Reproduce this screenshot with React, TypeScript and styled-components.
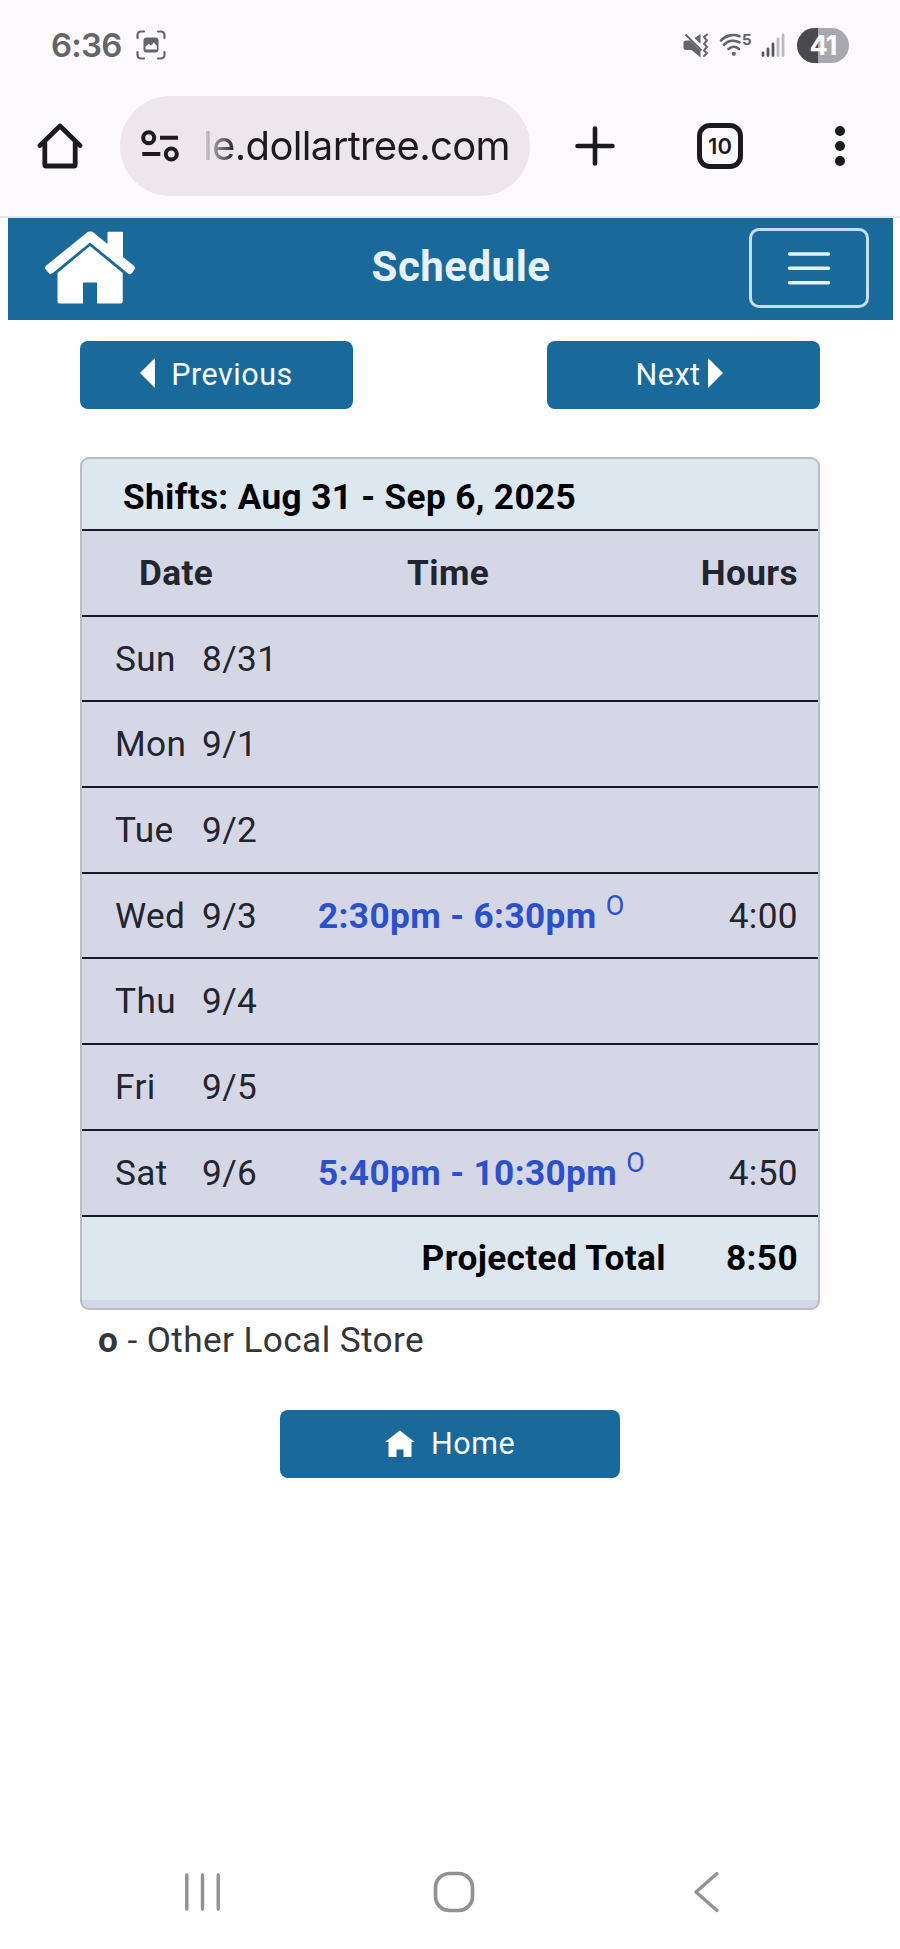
import React from "react";
import styled, { createGlobalStyle } from "styled-components";

const BLUE = "#1a699b";

const GlobalStyle = createGlobalStyle`
  * { box-sizing: border-box; }
  body { margin: 0; background: #fefefe; }
`;

const Screen = styled.div`
  width: 900px;
  height: 1949px;
  display: flex;
  flex-direction: column;
  overflow: hidden;
  background: #fefefe;
  font-family: Roboto, "Liberation Sans", sans-serif;
  svg { display: block; flex: none; }
`;

const BrowserChrome = styled.header`
  height: 218px;
  background: #fdfaff;
  border-bottom: 2px solid #e8e6ec;
`;

const StatusBar = styled.div`
  height: 90px;
  padding: 0 51px;
  display: flex;
  justify-content: space-between;
  align-items: center;
  font-family: Inter, sans-serif;
`;

const StatusGroup = styled.div<{ $gap: number }>`
  display: flex;
  align-items: center;
  gap: ${(p) => p.$gap}px;
`;

const Clock = styled.span`
  width: 70px;
  font-size: 33px;
  line-height: 40px;
  font-weight: 600;
  letter-spacing: -0.8px;
  color: #656568;
  white-space: nowrap;
`;

const Battery = styled.span`
  width: 52px;
  height: 35px;
  margin-left: 2px;
  border-radius: 18px;
  background: linear-gradient(90deg, #4a494c 41%, #a9a7af 41%);
  color: #fff;
  font-size: 27px;
  font-weight: 700;
  line-height: 36px;
  text-align: center;
  letter-spacing: -1px;
`;

const Toolbar = styled.div`
  height: 126px;
  padding: 6px 0 0 37px;
  display: flex;
  align-items: flex-start;
`;

const ToolButton = styled.span<{ $width: number; $gap: number }>`
  width: ${(p) => p.$width}px;
  height: 100px;
  margin-left: ${(p) => p.$gap}px;
  display: flex;
  align-items: center;
  justify-content: center;
`;

const AddressPill = styled.div`
  width: 410px;
  height: 100px;
  margin-left: 37px;
  padding-left: 21px;
  border-radius: 50px;
  background: #ede6ed;
  display: flex;
  align-items: center;
`;

const Address = styled.span`
  margin-left: 24px;
  width: 310px;
  font-family: Inter, sans-serif;
  font-size: 40px;
  line-height: 50px;
  letter-spacing: -0.65px;
  white-space: nowrap;
  color: transparent;
  background: linear-gradient(90deg, rgba(27, 26, 31, 0.1) 0, #1b1a1f 34px);
  background-clip: text;
  -webkit-background-clip: text;
`;

const TabCount = styled.span`
  width: 46px;
  height: 46px;
  border: 5px solid #1b1a1f;
  border-radius: 13px;
  color: #1b1a1f;
  font-family: Inter, sans-serif;
  font-size: 22px;
  font-weight: 600;
  line-height: 37px;
  text-align: center;
`;

const NavBar = styled.nav`
  height: 102px;
  margin: 0 7px 0 8px;
  padding: 0 24px 0 37px;
  background: ${BLUE};
  display: grid;
  grid-template-columns: 120px 1fr 120px;
  align-items: center;
`;

const BrandLink = styled.span`
  padding-bottom: 5px;
`;

const Title = styled.h1`
  margin: 0;
  padding: 0 0 4px 8px;
  text-align: center;
  color: #e6f2fd;
  font-size: 42px;
  line-height: 50px;
  font-weight: 700;
  letter-spacing: 0.5px;
`;

const MenuButton = styled.button`
  width: 120px;
  height: 80px;
  margin: 0 0 3px;
  padding: 0;
  border: 3px solid #c4dff3;
  border-radius: 10px;
  background: transparent;
  display: flex;
  align-items: center;
  justify-content: center;
`;

const Body = styled.main`
  flex: 1;
  padding: 21px 80px 0;
`;

const Pager = styled.div`
  display: flex;
  justify-content: space-between;
`;

const Button = styled.button<{ $width: number; $shift?: number }>`
  width: ${(p) => p.$width}px;
  height: 68px;
  padding: 0 ${(p) => p.$shift || 0}px 0 0;
  border: 0;
  border-radius: 8px;
  background: ${BLUE};
  color: #f5fbff;
  font: 400 30.5px/36px Roboto, "Liberation Sans", sans-serif;
  letter-spacing: 0.5px;
  display: flex;
  align-items: center;
  justify-content: center;
`;

const Card = styled.section`
  height: 853px;
  margin-top: 48px;
  border: 2px solid #b9bcc2;
  border-radius: 9px;
  background: #d5d7e6;
  overflow: hidden;
  font-size: 35.2px;
  line-height: 42px;
  letter-spacing: 0.38px;
  color: #22242f;
`;

const CardTitle = styled.h2`
  height: 70px;
  margin: 0;
  padding: 17px 0 0 41px;
  background: #dde7f0;
  color: #000;
  font-size: 35.2px;
  line-height: 42px;
  font-weight: 700;
  letter-spacing: 0.35px;
`;

const Row = styled.div<{ $head?: boolean; $total?: boolean }>`
  height: ${(p) => (p.$total ? 85 : 85.7)}px;
  padding: ${(p) => (p.$head ? "0 20px 0 57px" : "0 20px 0 33px")};
  border-top: 2px solid #171925;
  background: ${(p) => (p.$total ? "#dde7f0" : "transparent")};
  color: ${(p) => (p.$total ? "#000" : "#22242f")};
  font-weight: ${(p) => (p.$head || p.$total ? 700 : 400)};
  display: flex;
  align-items: center;
`;

const Cell = styled.span<{ $width: number; $align?: string }>`
  width: ${(p) => p.$width}px;
  flex: none;
  white-space: nowrap;
  text-align: ${(p) => p.$align || "left"};
`;

const Hours = styled.span`
  margin-left: auto;
`;

const Shift = styled.span`
  flex: none;
  white-space: nowrap;
  font-weight: 700;
  color: #2c50cb;
`;

const Marker = styled.sup`
  font-size: 27px;
  font-weight: 400;
  line-height: 0;
  vertical-align: 13px;
`;

const Legend = styled.p`
  margin: 9px 0 0 18px;
  font-size: 35.2px;
  line-height: 42px;
  letter-spacing: 0.4px;
  color: #34363a;
`;

const HomeRow = styled.div`
  margin-top: 49px;
  display: flex;
  justify-content: center;
`;

const SystemNav = styled.footer`
  height: 109px;
  padding: 31px 180px 0 184px;
  display: flex;
  justify-content: space-between;
`;

const HomeKey = styled.svg`
  margin-right: 6px;
`;

const WifiGlyph = styled.svg`
  margin-right: -4px;
`;

const CaptureIcon = () => (
  <svg width="30" height="30" viewBox="0 0 30 30" fill="none">
    <path d="M1.5 8V5a3.5 3.5 0 0 1 3.5-3.5H8M22 1.5h3A3.5 3.5 0 0 1 28.5 5v3M28.5 22v3a3.5 3.5 0 0 1-3.5 3.5h-3M8 28.5H5A3.5 3.5 0 0 1 1.5 25v-3" stroke="#656568" strokeWidth="2.2" strokeLinecap="round" />
    <rect x="7.5" y="7.5" width="15" height="15" rx="3" fill="#656568" />
    <path d="M9.500 19.500v-3l3.300-2.700 2.200 2 2.800-3.300 3 3.400v3.600z" fill="#fdfaff" />
  </svg>
);

const MuteIcon = () => (
  <svg width="26" height="25" viewBox="0 0 26 25" fill="none">
    <path d="M17.500 1v10L11.500 5z" fill="#656568" />
    <path d="M3 7.500h4L17.500 18v6.500L8.500 17H3a2.500 2.500 0 0 1-2.500-2.500V10A2.500 2.500 0 0 1 3 7.500z" fill="#656568" />
    <path d="M2.500 1.500L18.500 17.500" stroke="#656568" strokeWidth="2" />
    <path d="M24 1.500l-3 2.600 3 3.400-3 3.200 3 3.300-3 3.400 3 2.800-3 2.800" stroke="#656568" strokeWidth="2" strokeLinecap="round" strokeLinejoin="round" />
  </svg>
);

const WifiIcon = () => (
  <WifiGlyph width="36" height="36" viewBox="0 -6 36 36" fill="none">
    <g stroke="#656568" strokeWidth="2.600" strokeLinecap="round">
      <path d="M2 7.500C7 2 15 0.800 20.500 3.200" />
      <path d="M5 11.800C9 7.300 15.500 6.500 20.500 9.400" />
      <path d="M9.500 16c3.300-3 7.700-3 10.500 0" />
    </g>
    <circle cx="14.800" cy="20.800" r="2.100" fill="#656568" />
    <text x="23" y="12" fontFamily="Inter, sans-serif" fontSize="15" fontWeight="700" fill="#656568">5</text>
  </WifiGlyph>
);

const SignalIcon = () => (
  <svg width="24" height="25" viewBox="0 0 24 25" strokeWidth="2.800" strokeLinecap="round">
    <path d="M2 20v2.500M7 16v6.500M12 11v11.500" stroke="#58575b" />
    <path d="M17 6v16.500M22 2v20.500" stroke="#bcbac0" />
  </svg>
);

const BrowserHomeIcon = () => (
  <svg width="46" height="46" viewBox="0 0 46 46" fill="none" stroke="#1b1a1f" strokeWidth="4.800" strokeLinecap="round" strokeLinejoin="round">
    <path d="M3 22.500L23 3l20 19.500" />
    <path d="M7.800 19v22.500a1.500 1.500 0 0 0 1.500 1.500h27.400a1.500 1.500 0 0 0 1.500-1.500V19" />
  </svg>
);

const TuneIcon = () => (
  <svg width="38" height="32" viewBox="0 0 38 32" fill="none" stroke="#1b1a1f" strokeWidth="4">
    <circle cx="7.700" cy="7.700" r="5.500" />
    <path d="M19 7.700h18M1.300 24h18" />
    <circle cx="30.300" cy="24" r="5.500" />
  </svg>
);

const PlusIcon = () => (
  <svg width="40" height="40" viewBox="0 0 40 40" stroke="#1b1a1f" strokeWidth="4.600" strokeLinecap="round">
    <path d="M20 2.500v35M2.500 20h35" />
  </svg>
);

const DotsIcon = () => (
  <svg width="10" height="42" viewBox="0 0 10 42" fill="#1b1a1f">
    <circle cx="5" cy="6" r="5" />
    <circle cx="5" cy="21" r="5" />
    <circle cx="5" cy="36" r="5" />
  </svg>
);

const HouseIcon = () => (
  <svg width="90" height="74" viewBox="0 0 90 74" fill="#fff">
    <path d="M42 2.500a4 4 0 0 1 2.500-1h1.500a4 4 0 0 1 2.500 1L62.500 14V2.800a1 1 0 0 1 1-1h13.500a1 1 0 0 1 1 1V27l10.800 8.800a3 3 0 0 1 .5 4L87 43a3 3 0 0 1-4 .5L45 12.500 7.500 43.300a3 3 0 0 1-4-.5L.8 39.500a3 3 0 0 1 .5-4z" />
    <path d="M45 16L77.700 43v28.500a2 2 0 0 1-2 2H52V52.500H38v21H14.500a2 2 0 0 1-2-2V43z" />
  </svg>
);

const MenuIcon = () => (
  <svg width="44" height="34" viewBox="0 0 44 34" stroke="#e3f3ff" strokeWidth="3.600" strokeLinecap="round">
    <path d="M2.500 3h39M2.500 17.300h39M2.500 31.700h39" />
  </svg>
);

const SmallHomeIcon = () => (
  <svg width="30" height="28" viewBox="0 0 30 28" fill="#fff">
    <path d="M14.800 0.500L29.700 12H26.500v15H18.500v-7.500h-7V27h-8V12H0z" />
  </svg>
);

const Arrow = styled.svg<{ $before?: boolean }>`
  margin: ${(p) => (p.$before ? "0 16px 4px 0" : "0 0 4px 7px")};
`;

const days = [
  { day: "Sun", date: "8/31" },
  { day: "Mon", date: "9/1" },
  { day: "Tue", date: "9/2" },
  { day: "Wed", date: "9/3", shift: "2:30pm - 6:30pm", hours: "4:00" },
  { day: "Thu", date: "9/4" },
  { day: "Fri", date: "9/5" },
  { day: "Sat", date: "9/6", shift: "5:40pm - 10:30pm", hours: "4:50" },
];

export default function App() {
  return (
    <Screen>
      <GlobalStyle />
      <BrowserChrome>
        <StatusBar>
          <StatusGroup $gap={15}>
            <Clock>6:36</Clock>
            <CaptureIcon />
          </StatusGroup>
          <StatusGroup $gap={10}>
            <MuteIcon />
            <WifiIcon />
            <SignalIcon />
            <Battery>41</Battery>
          </StatusGroup>
        </StatusBar>
        <Toolbar>
          <ToolButton $width={46} $gap={0}><BrowserHomeIcon /></ToolButton>
          <AddressPill>
            <TuneIcon />
            <Address>le.dollartree.com</Address>
          </AddressPill>
          <ToolButton $width={40} $gap={45}><PlusIcon /></ToolButton>
          <ToolButton $width={46} $gap={82}><TabCount>10</TabCount></ToolButton>
          <ToolButton $width={10} $gap={92}><DotsIcon /></ToolButton>
        </Toolbar>
      </BrowserChrome>
      <NavBar>
        <BrandLink><HouseIcon /></BrandLink>
        <Title>Schedule</Title>
        <MenuButton aria-label="Menu"><MenuIcon /></MenuButton>
      </NavBar>
      <Body>
        <Pager>
          <Button $width={273}>
            <Arrow $before width="15" height="30" viewBox="0 0 15 30"><path d="M15 0v30L0 15z" fill="#fff" /></Arrow>
            Previous
          </Button>
          <Button $width={273} $shift={9}>
            Next
            <Arrow width="15" height="30" viewBox="0 0 15 30"><path d="M0 0v30l15-15z" fill="#fff" /></Arrow>
          </Button>
        </Pager>
        <Card>
          <CardTitle>Shifts: Aug 31 - Sep 6, 2025</CardTitle>
          <Row $head>
            <Cell $width={268}>Date</Cell>
            <Cell $width={100}>Time</Cell>
            <Hours>Hours</Hours>
          </Row>
          {days.map((d) => (
            <Row key={d.date}>
              <Cell $width={87}>{d.day}</Cell>
              <Cell $width={116}>{d.date}</Cell>
              {d.shift && <Shift>{d.shift} <Marker>O</Marker></Shift>}
              {d.hours && <Hours>{d.hours}</Hours>}
            </Row>
          ))}
          <Row $total>
            <Cell $width={551} $align="right">Projected Total</Cell>
            <Hours>8:50</Hours>
          </Row>
        </Card>
        <Legend><b>o</b> - Other Local Store</Legend>
        <HomeRow>
          <Button $width={340}>
            <SmallHomeIcon />
            <span>&nbsp; Home</span>
          </Button>
        </HomeRow>
      </Body>
      <SystemNav>
        <svg width="37" height="42" viewBox="0 0 37 42" stroke="#929292" strokeWidth="3.400" strokeLinecap="round">
          <path d="M2.800 4v34M18.500 4v34M34.200 4v34" />
        </svg>
        <HomeKey width="42" height="42" viewBox="0 0 42 42" fill="none" stroke="#929292" strokeWidth="3.700">
          <rect x="2.500" y="2.500" width="37" height="37" rx="14" />
        </HomeKey>
        <svg width="27" height="42" viewBox="0 0 27 42" fill="none" stroke="#929292" strokeWidth="3.300" strokeLinecap="round" strokeLinejoin="round">
          <path d="M24 2.500L3 21l21 18.500" />
        </svg>
      </SystemNav>
    </Screen>
  );
}
